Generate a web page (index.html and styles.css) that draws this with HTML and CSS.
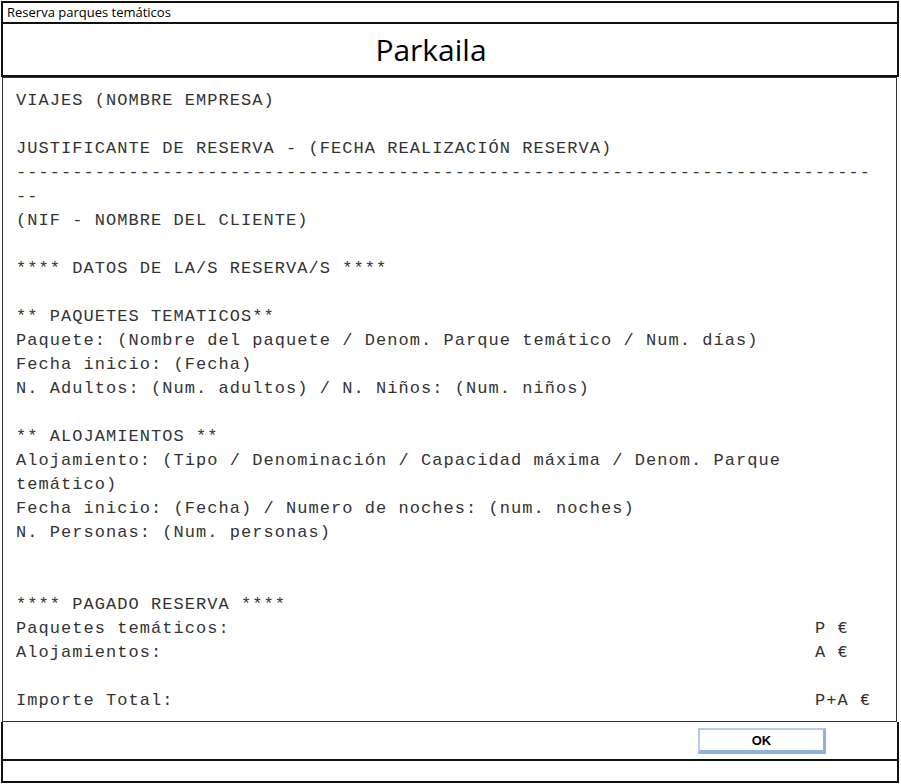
FILE: index.html
```html
<!DOCTYPE html>
<html lang="es">
<head>
<meta charset="utf-8">
<title>Reserva parques temáticos</title>
<link rel="stylesheet" href="styles.css">
</head>
<body>
<div class="window">
  <div class="titlebar">Reserva parques temáticos</div>
  <header class="header"><h1 class="brand">Parkaila</h1></header>
  <main class="receipt">
    <div class="line">VIAJES (NOMBRE EMPRESA)</div>
    <div class="line gap">JUSTIFICANTE DE RESERVA - (FECHA REALIZACIÓN RESERVA)</div>
    <div class="line">----------------------------------------------------------------------------</div>
    <div class="line">--</div>
    <div class="line">(NIF - NOMBRE DEL CLIENTE)</div>
    <div class="line gap">**** DATOS DE LA/S RESERVA/S ****</div>
    <div class="line gap">** PAQUETES TEMATICOS**</div>
    <div class="line">Paquete: (Nombre del paquete / Denom. Parque temático / Num. días)</div>
    <div class="line">Fecha inicio: (Fecha)</div>
    <div class="line">N. Adultos: (Num. adultos) / N. Niños: (Num. niños)</div>
    <div class="line gap">** ALOJAMIENTOS **</div>
    <div class="line">Alojamiento: (Tipo / Denominación / Capacidad máxima / Denom. Parque</div>
    <div class="line">temático)</div>
    <div class="line">Fecha inicio: (Fecha) / Numero de noches: (num. noches)</div>
    <div class="line">N. Personas: (Num. personas)</div>
    <div class="line gap2">**** PAGADO RESERVA ****</div>
    <div class="line amount-row"><span>Paquetes temáticos:</span><span>P €</span></div>
    <div class="line amount-row"><span>Alojamientos:</span><span>A €</span></div>
    <div class="line amount-row gap"><span>Importe Total:</span><span>P+A €</span></div>
  </main>
  <div class="actions"><button class="ok" type="button">OK</button></div>
  <div class="statusbar"></div>
</div>
</body>
</html>
```
FILE: styles.css
```css
html, body {
  margin: 0;
  padding: 0;
  background: #fff;
}

.window {
  width: 898px;
  margin: 1px 0 0 1px;
  display: flex;
  flex-direction: column;
}

.titlebar {
  height: 19px;
  border: 2px solid #111;
  padding-left: 4px;
  font-family: "Open Sans", "Liberation Sans", sans-serif;
  font-size: 13px;
  line-height: 19px;
  color: #000;
}

.header {
  height: 51px;
  border: 2px solid #111;
  border-top: none;
  display: flex;
  align-items: center;
  justify-content: center;
  padding-right: 38px;
}

.brand {
  margin: 0;
  font-family: "Open Sans", "Liberation Sans", sans-serif;
  font-weight: 500;
  font-size: 30px;
  color: #000;
}

.receipt {
  height: 632px;
  margin: 0 2px 0 1px;
  border: 1px solid #333;
  padding: 11px 0 0 13px;
  font-family: "Liberation Mono", monospace;
  font-size: 17px;
  letter-spacing: 1.05px;
  line-height: 24px;
  color: #333;
}

.line {
  white-space: pre;
  height: 24px;
}

.gap {
  margin-top: 24px;
}

.gap2 {
  margin-top: 48px;
}

.amount-row {
  display: grid;
  grid-template-columns: 799px auto;
}

.actions {
  height: 37px;
  border-left: 2px solid #111;
  border-right: 2px solid #111;
  display: flex;
  align-items: flex-start;
  padding: 6px 0 0 695px;
  box-sizing: border-box;
}

.ok {
  width: 128px;
  height: 26px;
  padding: 0;
  background: #fff;
  border: 2px solid #b3cbee;
  border-right: 3px solid #8fb0e2;
  border-bottom: 4px solid #8fb0e2;
  font-family: "Liberation Sans", "Open Sans", sans-serif;
  font-weight: 700;
  font-size: 13px;
  color: #000;
}

.statusbar {
  height: 20px;
  border: 2px solid #111;
}
```
